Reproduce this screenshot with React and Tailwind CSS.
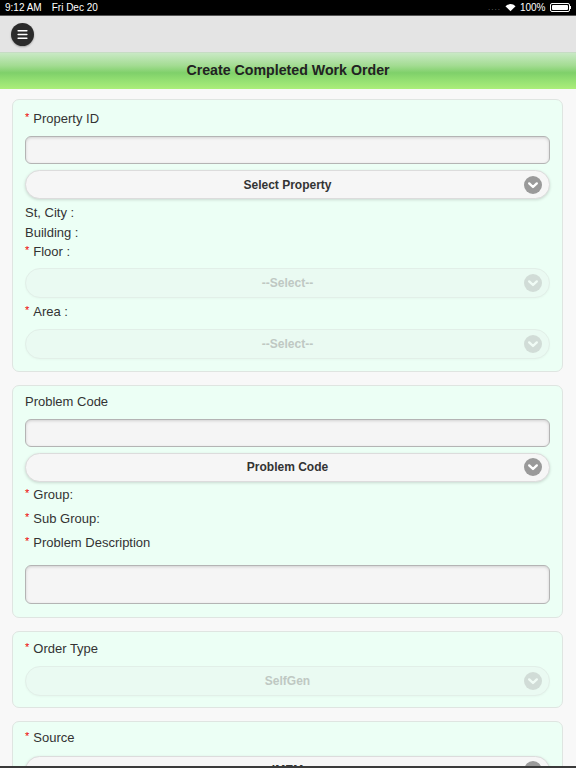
import { Menu } from 'lucide-react';

// chevron badge used at the right of every select button
function Chevron({ faded }) {
  return (
    <svg width="18" height="18" viewBox="0 0 18 18" className={faded ? 'opacity-30' : ''}>
      <circle cx="9" cy="9" r="9" fill="#9a9a9a" />
      <path d="M5.2 7.4 L9 11 L12.8 7.4" fill="none" stroke="#fff" strokeWidth="2.4" strokeLinecap="round" strokeLinejoin="round" />
    </svg>
  );
}

function Label({ text, required, className = '' }) {
  return (
    <div className={`flex items-center text-[13px] text-[#333] ${className}`}>
      {required && <span className="text-[#e00] text-[11px] mr-[4px] -mt-[3px]">*</span>}
      <span>{text}</span>
    </div>
  );
}

function TextBox({ tall }) {
  return (
    <div
      className={`w-full ${tall ? 'h-[39px]' : 'h-[28px]'} rounded-[6px] bg-[#f5f5f5] border border-[#b4b4b4] shadow-[inset_0_1px_3px_rgba(0,0,0,0.15)]`}
    />
  );
}

function SelectBtn({ text, disabled }) {
  return (
    <div
      className={`relative w-full ${disabled ? 'h-[30px]' : 'h-[29px]'} rounded-[15px] flex items-center justify-center border ${
        disabled
          ? 'bg-[#eafaf2] border-[#e2efe8] shadow-[0_1px_2px_rgba(0,0,0,0.03)]'
          : 'bg-[#f6f6f6] border-[#dcdcdc] shadow-[0_1px_3px_rgba(0,0,0,0.15)]'
      }`}
    >
      <span className={`text-[12px] font-bold ${disabled ? 'text-[#bfc8c3]' : 'text-[#333]'}`}>{text}</span>
      <div className="absolute right-[7px] top-1/2 -translate-y-1/2 flex">
        <Chevron faded={disabled} />
      </div>
    </div>
  );
}

function Card({ children, className = '' }) {
  return (
    <div className={`mx-[12px] mr-[13px] rounded-[7px] border border-[#dfe5e1] bg-[#ecfff5] px-[12px] ${className}`}>
      {children}
    </div>
  );
}

export default function App() {
  return (
    <div className="w-[576px] min-h-[768px] bg-[#f8f8f8] font-['Liberation_Sans',Arial,sans-serif] overflow-hidden">
      {/* status bar */}
      <div className="h-[16px] bg-black border-b border-[#555] flex items-center justify-between px-[5px] text-white text-[10px]">
        <div className="flex gap-[10px]">
          <span>9:12 AM</span>
          <span>Fri Dec 20</span>
        </div>
        <div className="flex items-center gap-[4px]">
          <span className="text-[#777] tracking-[1px] text-[8px]">....</span>
          <svg width="11" height="9" viewBox="0 0 12 9">
            <path d="M6 8.5 L0.5 3 A8 8 0 0 1 11.5 3 Z" fill="#fff" />
          </svg>
          <span>100%</span>
          <div className="flex items-center">
            <div className="w-[20px] h-[9px] border border-white rounded-[2px] p-[1px]">
              <div className="w-full h-full bg-white rounded-[1px]" />
            </div>
            <div className="w-[1.5px] h-[3px] bg-white" />
          </div>
        </div>
      </div>

      {/* toolbar */}
      <div className="h-[37px] bg-[#e4e4e4] flex items-center pl-[11px] border-b border-[#c6dcc4]">
        <div className="w-[23px] h-[23px] rounded-full bg-[#2b2b2b] flex items-center justify-center shadow-[0_1px_2px_rgba(0,0,0,0.3)]">
          <Menu size={13} color="#fff" strokeWidth={3} />
        </div>
      </div>

      {/* title bar */}
      <div className="h-[36px] bg-[linear-gradient(to_bottom,#c9e9c5_0%,#a3dc92_35%,#7fd06a_55%,#93df72_75%,#abee7a_100%)] flex items-center justify-center">
        <h1 className="text-[14.2px] font-bold text-[#222]">Create Completed Work Order</h1>
      </div>

      <div className="pt-[10px] flex flex-col gap-[13px]">
        <Card className="pt-[10px] pb-[12px]">
          <Label text="Property ID" required className="h-[18px]" />
          <div className="mt-[8px]">
            <TextBox />
          </div>
          <div className="mt-[6px]">
            <SelectBtn text="Select Property" />
          </div>
          <Label text="St, City :" className="h-[19.5px] mt-[4px]" />
          <Label text="Building :" className="h-[19.5px]" />
          <Label text="Floor :" required className="h-[19.5px]" />
          <div className="mt-[6px]">
            <SelectBtn text="--Select--" disabled />
          </div>
          <Label text="Area :" required className="h-[18px] mt-[5px]" />
          <div className="mt-[8px]">
            <SelectBtn text="--Select--" disabled />
          </div>
        </Card>

        <Card className="pt-[7px] pb-[13px]">
          <Label text="Problem Code" className="h-[18px]" />
          <div className="mt-[8px]">
            <TextBox />
          </div>
          <div className="mt-[6px]">
            <SelectBtn text="Problem Code" />
          </div>
          <Label text="Group:" required className="h-[18px] mt-[4px]" />
          <Label text="Sub Group:" required className="h-[18px] mt-[6px]" />
          <Label text="Problem Description" required className="h-[18px] mt-[6px]" />
          <div className="mt-[13px]">
            <TextBox tall />
          </div>
        </Card>

        <Card className="pt-[8px] pb-[11px]">
          <Label text="Order Type" required className="h-[18px]" />
          <div className="mt-[8px]">
            <SelectBtn text="SelfGen" disabled />
          </div>
        </Card>

        <Card className="pt-[7px] pb-[13px]">
          <Label text="Source" required className="h-[18px]" />
          <div className="mt-[9px]">
            <SelectBtn text="IMEM" />
          </div>
        </Card>
      </div>

      {/* bottom edge of fixed footer */}
      <div className="fixed left-0 right-0 bottom-0 h-[2px] bg-[#3a3a3a]" />
    </div>
  );
}
